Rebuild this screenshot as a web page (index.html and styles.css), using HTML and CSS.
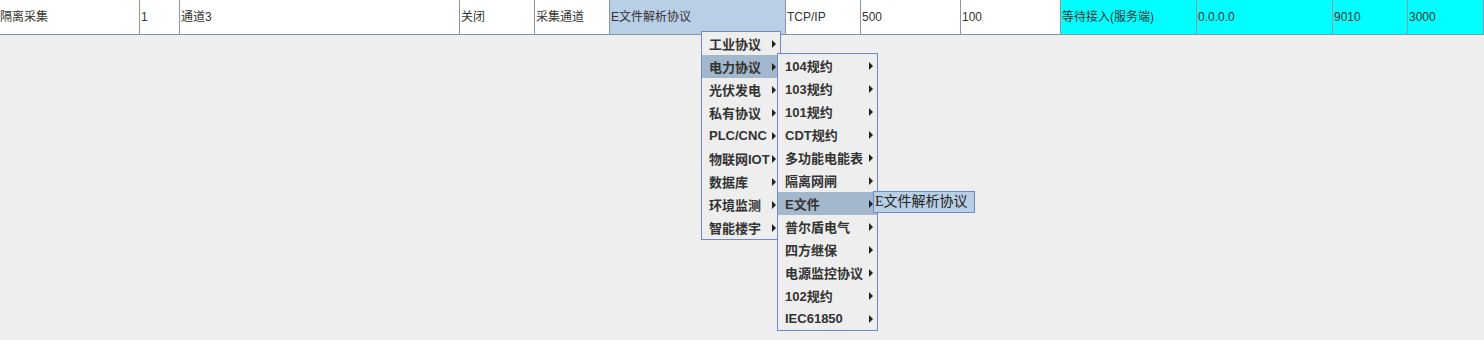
FILE: index.html
```html
<!DOCTYPE html>
<html lang="zh-CN">
<head>
  <meta charset="UTF-8">
  <title>通道列表</title>
  <link rel="stylesheet" href="styles.css">
</head>
<body>
  <!-- 通道行 -->
  <div class="row">
    <div class="cell c1">隔离采集</div>
    <div class="cell c2">1</div>
    <div class="cell c3">通道3</div>
    <div class="cell c4">关闭</div>
    <div class="cell c5">采集通道</div>
    <div class="cell c6 picked">E文件解析协议</div>
    <div class="cell c7">TCP/IP</div>
    <div class="cell c8">500</div>
    <div class="cell c9">100</div>
    <div class="cell c10 live">等待接入(服务端)</div>
    <div class="cell c11 live">0.0.0.0</div>
    <div class="cell c12 live">9010</div>
    <div class="cell c13 live">3000</div>
  </div>

  <!-- 协议菜单 -->
  <ul class="menu menu-1">
    <li class="item"><span>工业协议</span><i class="arrow"></i></li>
    <li class="item on"><span>电力协议</span><i class="arrow"></i></li>
    <li class="item"><span>光伏发电</span><i class="arrow"></i></li>
    <li class="item"><span>私有协议</span><i class="arrow"></i></li>
    <li class="item"><span>PLC/CNC</span><i class="arrow"></i></li>
    <li class="item"><span>物联网IOT</span><i class="arrow"></i></li>
    <li class="item"><span>数据库</span><i class="arrow"></i></li>
    <li class="item"><span>环境监测</span><i class="arrow"></i></li>
    <li class="item"><span>智能楼宇</span><i class="arrow"></i></li>
  </ul>

  <ul class="menu menu-2">
    <li class="item"><span>104规约</span><i class="arrow"></i></li>
    <li class="item"><span>103规约</span><i class="arrow"></i></li>
    <li class="item"><span>101规约</span><i class="arrow"></i></li>
    <li class="item"><span>CDT规约</span><i class="arrow"></i></li>
    <li class="item"><span>多功能电能表</span><i class="arrow"></i></li>
    <li class="item"><span>隔离网闸</span><i class="arrow"></i></li>
    <li class="item on"><span>E文件</span><i class="arrow"></i></li>
    <li class="item"><span>普尔盾电气</span><i class="arrow"></i></li>
    <li class="item"><span>四方继保</span><i class="arrow"></i></li>
    <li class="item"><span>电源监控协议</span><i class="arrow"></i></li>
    <li class="item"><span>102规约</span><i class="arrow"></i></li>
    <li class="item"><span>IEC61850</span><i class="arrow"></i></li>
  </ul>

  <ul class="menu menu-3">
    <li class="leaf">E文件解析协议</li>
  </ul>
</body>
</html>
```

FILE: styles.css
```css
* {
  margin: 0;
  padding: 0;
  box-sizing: border-box;
}
body {
  background: #eeeeee;
  font-family: "Liberation Sans", "Noto Sans CJK SC", sans-serif;
  color: #333;
  position: relative;
  width: 1484px;
  height: 340px;
  overflow: hidden;
}
.row {
  display: flex;
  height: 35px;
  background: #fff;
  border-bottom: 1px solid #8595a8;
}
.cell {
  height: 34px;
  line-height: 34px;
  font-size: 12px;
  padding-left: 1px;
  border-right: 1px solid #8a96a8;
  white-space: nowrap;
  overflow: hidden;
}
.c1 { width: 140px; padding-left: 0; }
.c2 { width: 40px; }
.c3 { width: 280px; }
.c4 { width: 75px; }
.c5 { width: 75px; }
.c6 { width: 176px; }
.c7 { width: 75px; }
.c8 { width: 100px; }
.c9 { width: 100px; }
.c10 { width: 136px; }
.c11 { width: 136px; }
.c12 { width: 75px; }
.c13 { width: 76px; }
.picked {
  background: #b8cfe5;
}
.live {
  background: #00ffff;
  border-right-color: #a08e9c;
}
.c13 {
  border-right-color: #8a96a8;
}

/* 弹出菜单 */
.menu {
  position: absolute;
  list-style: none;
  background: #eeeeee;
  border: 1px solid #6f89c6;
}
.menu-1 {
  left: 701px;
  top: 31px;
  width: 80px;
}
.menu-2 {
  left: 777px;
  top: 53px;
  width: 101px;
}
.menu-3 {
  left: 873px;
  top: 191px;
  width: 102px;
  height: 22px;
  background: #b8cfe5;
}
.item {
  height: 23px;
  display: flex;
  align-items: center;
  justify-content: space-between;
  padding: 0 4px 0 7px;
  font-size: 13px;
  font-weight: bold;
  white-space: nowrap;
}
.item.on {
  background: #a3b8cc;
}
.arrow {
  width: 0;
  height: 0;
  border-left: 4px solid #222;
  border-top: 4px solid transparent;
  border-bottom: 4px solid transparent;
}
.leaf {
  height: 20px;
  line-height: 20px;
  padding-left: 1px;
  font-family: "Liberation Serif", "Noto Sans CJK SC", serif;
  font-size: 14px;
  color: #222;
  white-space: nowrap;
}
```
